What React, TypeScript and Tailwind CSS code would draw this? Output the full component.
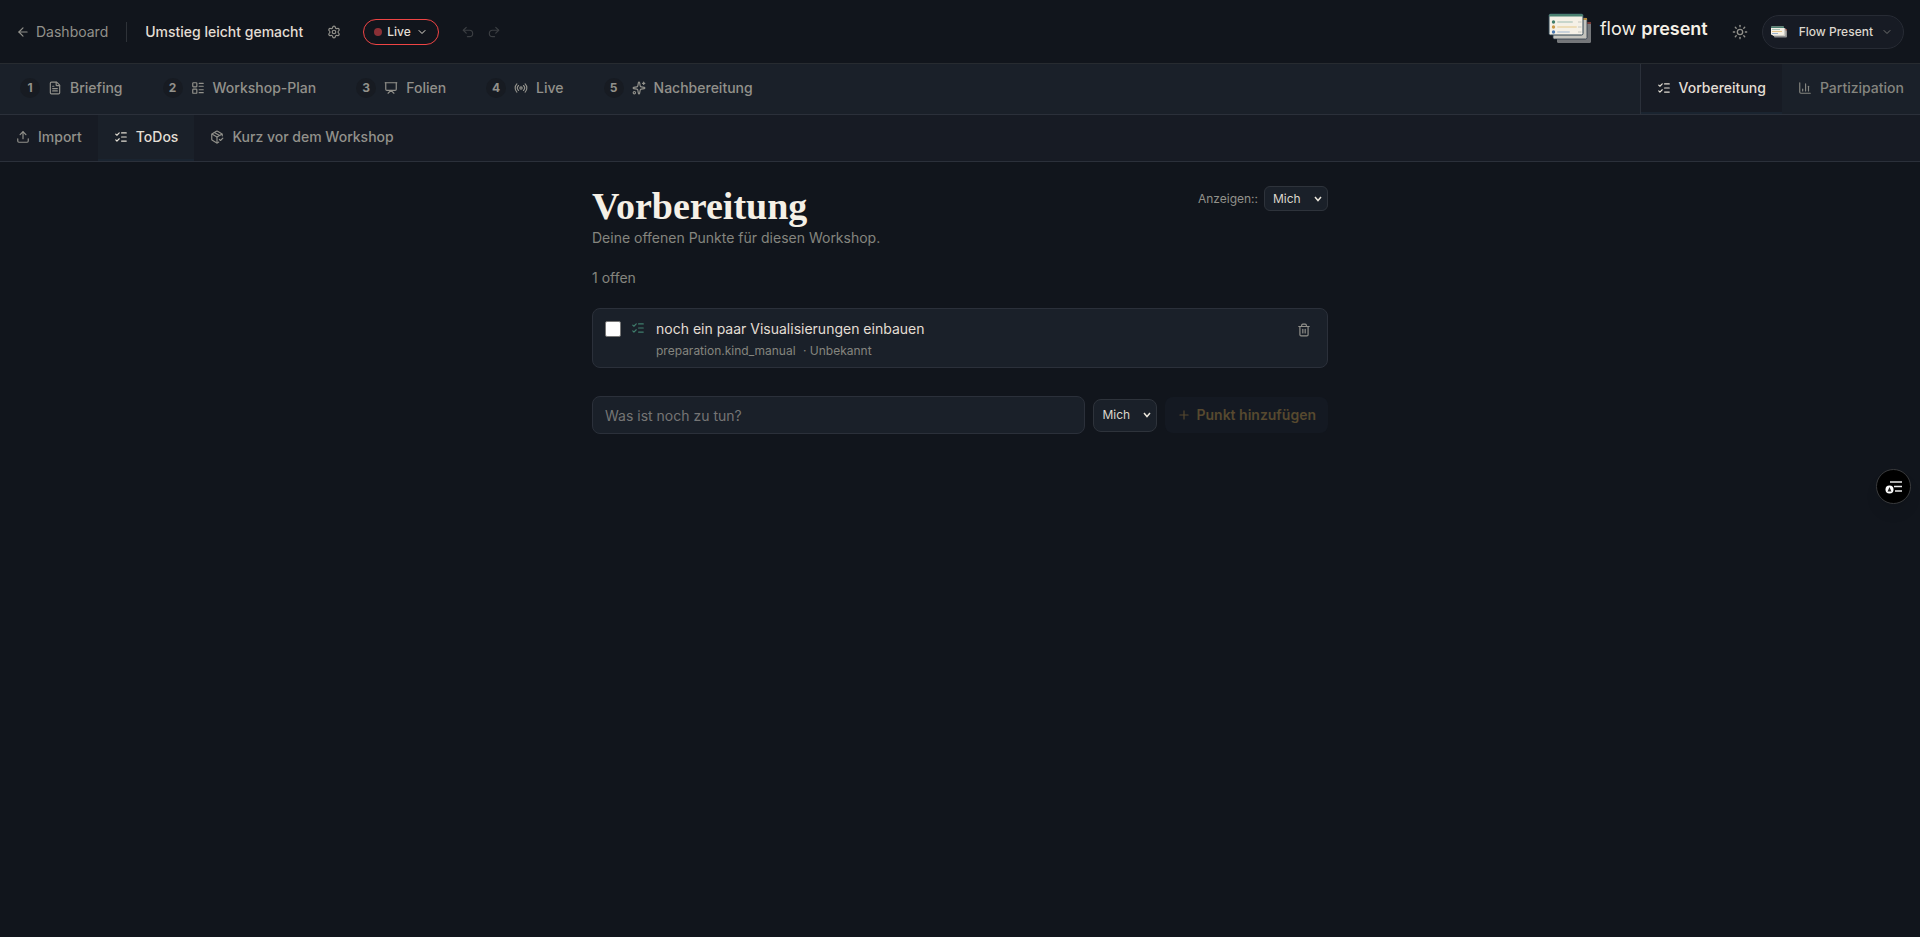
import {
    ArrowLeft,
    ChartColumn,
    ChevronDown,
    FileText,
    LayoutList,
    ListChecks,
    PackageCheck,
    Plus,
    Presentation,
    Radio,
    Redo2,
    Settings,
    Sparkles,
    Sun,
    Trash2,
    Undo2,
    Upload,
} from "lucide-react";

const steps = [
    { label: "Briefing", icon: FileText },
    { label: "Workshop-Plan", icon: LayoutList },
    { label: "Folien", icon: Presentation },
    { label: "Live", icon: Radio },
    { label: "Nachbereitung", icon: Sparkles },
];

const areas = [
    { label: "Vorbereitung", icon: ListChecks, active: true },
    { label: "Partizipation", icon: ChartColumn, active: false },
];

const subTabs = [
    { label: "Import", icon: Upload, active: false },
    { label: "ToDos", icon: ListChecks, active: true },
    { label: "Kurz vor dem Workshop", icon: PackageCheck, active: false },
];

const Logo = ({ className }: { className: string }) => (
    <svg viewBox="0 0 44 32" className={className} aria-hidden="true">
        <rect x="9" y="9" width="34" height="21" rx="1.5" fill="#75777a" />
        <rect x="39" y="9" width="4" height="2" fill="#7a3a35" />
        <rect x="5" y="5" width="34" height="21" rx="1.5" fill="#c4c3bd" stroke="#2c3947" strokeWidth="0.8" />
        <rect x="35" y="5" width="4" height="2" fill="#b58a3e" />
        <rect x="1" y="1" width="34" height="21" rx="1.5" fill="#f5f0e6" stroke="#2c4250" strokeWidth="1" />
        <path d="M1 2.500Q1 1 2.500 1H33.500Q35 1 35 2.500V3.500H1Z" fill="#4a8070" />
        <circle cx="5.500" cy="9" r="1.700" fill="#3f7d6c" />
        <circle cx="5.500" cy="14" r="1.700" fill="#c99a4a" />
        <circle cx="5.500" cy="19" r="1.700" fill="#4a78b0" />
        <rect x="9" y="8" width="16" height="2" rx="1" fill="#c8d5cb" />
        <rect x="9" y="13" width="20" height="2" rx="1" fill="#eddcb8" />
        <rect x="9" y="18" width="13" height="2" rx="1" fill="#c9d2da" />
        <path d="M30 9h3.500M30 14h3.500M30 19h3.500" stroke="#d5d3cc" strokeWidth="1.500" />
    </svg>
);

// Simplified mark that stays readable at avatar size
const LogoSmall = ({ className }: { className: string }) => (
    <svg viewBox="0 0 16 12" className={className} aria-hidden="true">
        <rect x="3" y="3" width="13" height="8.500" rx="1" fill="#8d8e8f" />
        <rect x="14" y="3" width="2" height="1.500" fill="#8a4a42" />
        <rect x="1.500" y="2" width="13" height="8" rx="1" fill="#cfcdc6" />
        <rect x="0" y="0.500" width="13" height="8.500" rx="1" fill="#f5f0e6" />
        <rect x="0" y="0.500" width="13" height="1.500" fill="#4a8070" />
        <rect x="1" y="3" width="8" height="1" fill="#a9c2b8" />
        <rect x="1" y="5" width="10" height="1" fill="#e3c48a" />
        <rect x="1" y="7" width="6" height="1" fill="#9db3cc" />
    </svg>
);

const TopBar = () => (
    <header className="flex h-16 items-center justify-between border-b border-[#272b30] px-4">
        <div className="flex items-center">
            <a href="#dashboard" className="flex items-center gap-1.5 text-[#92918b]">
                <ArrowLeft size={14} />
                Dashboard
            </a>
            <div className="mx-[18px] h-5 w-px bg-[#2e3238]" />
            <h2 className="font-medium text-[#e3ded4]">Umstieg leicht gemacht</h2>
            <button aria-label="Einstellungen" className="ml-4 p-2 text-[#92918b]">
                <Settings size={14} />
            </button>
            <button className="ml-3.5 flex h-[26px] items-center gap-[5px] rounded-full border border-[#ef4444] px-2.5 text-xs font-medium text-[#e3ded4]">
                <span className="size-2 rounded-full bg-[#8b3036]" />
                Live
                <ChevronDown size={12} />
            </button>
            <button aria-label="Rückgängig" disabled className="ml-4 p-1.5 text-[#3b3e42]">
                <Undo2 size={14} />
            </button>
            <button aria-label="Wiederholen" disabled className="p-1.5 text-[#3b3e42]">
                <Redo2 size={14} />
            </button>
        </div>

        <div className="flex items-center">
            <a href="#home" className="flex items-center gap-2 pb-1.5 text-lg text-[#f5f0e6]">
                <Logo className="h-8 w-11" />
                <span>
                    flow <strong className="font-semibold">present</strong>
                </span>
            </a>
            <button aria-label="Helles Design" className="ml-4 p-2 text-[#92918b]">
                <Sun size={16} />
            </button>
            <button className="ml-1.5 flex h-[34px] items-center rounded-full border border-[#272b34] bg-[#171b24] pr-2.5 pl-2 text-xs font-medium text-[#dcd7cd]">
                <LogoSmall className="h-3 w-4" />
                <span className="mr-2 ml-3">Flow Present</span>
                <ChevronDown size={12} className="text-[#6f706e]" />
            </button>
        </div>
    </header>
);

const StepBar = () => (
    <nav aria-label="Phasen" className="flex justify-between border-b border-[#2b303a] bg-[#1a2029] font-medium">
        <div className="flex">
            {steps.map(({ label, icon: Icon }, index) => (
                <button key={label} className="flex items-center gap-2 border-b-2 border-transparent px-5 text-[#92918b]">
                    <span className="flex size-5 items-center justify-center rounded-full bg-[#171b22] text-xs font-bold">
                        {index + 1}
                    </span>
                    <Icon size={14} />
                    {label}
                </button>
            ))}
        </div>
        <div className="flex border-l border-[#2b303a]">
            {areas.map(({ label, icon: Icon, active }) => (
                <button
                    key={label}
                    className={`flex h-[50px] items-center gap-2 border-b-2 px-4 ${
                        active ? "border-[#1a2430] bg-[#171b24] text-[#e3ded4]" : "border-transparent text-[#85857f]"
                    }`}
                >
                    <Icon size={14} />
                    {label}
                </button>
            ))}
        </div>
    </nav>
);

const SubBar = () => (
    <nav aria-label="Vorbereitung" className="flex border-b border-[#2b303a] bg-[#171b24] font-medium">
        {subTabs.map(({ label, icon: Icon, active }) => (
            <button
                key={label}
                className={`flex h-[46px] items-center gap-2 border-b-2 px-4 ${
                    active ? "border-[#1a2430] bg-[#1a2029] text-[#e3ded4]" : "border-transparent text-[#92918b]"
                }`}
            >
                <Icon size={14} />
                {label}
            </button>
        ))}
    </nav>
);

const PersonSelect = ({ id, label, className }: { id: string; label?: string; className: string }) => (
    <div className="relative">
        <select
            id={id}
            aria-label={label}
            className={`w-16 appearance-none border border-[#2e333b] bg-[#1a2029] pl-2 text-xs text-[#dcd7cd] ${className}`}
        >
            <option>Mich</option>
            <option>Alle</option>
        </select>
        <svg viewBox="0 0 8 6" className="pointer-events-none absolute inset-y-0 right-1.5 my-auto h-1.5 w-2" aria-hidden="true">
            <path d="M1 1l3 3.500L7 1" fill="none" stroke="#ebe6dc" strokeWidth="1.500" />
        </svg>
    </div>
);

export default function App() {
    return (
        <div className="min-h-screen bg-[#11151c] font-['Inter',sans-serif] text-sm text-[#e3ded4]">
            <TopBar />
            <StepBar />
            <SubBar />

            <main className="mx-auto flex max-w-3xl flex-col gap-5 px-4 py-6">
                <div className="flex items-start justify-between">
                    <div>
                        <h1 className="font-['Liberation_Serif',serif] text-[38px] leading-10 font-bold text-[#f5f0e6]">
                            Vorbereitung
                        </h1>
                        <p className="mt-0.5 text-[#85857f]">Deine offenen Punkte für diesen Workshop.</p>
                    </div>
                    <div className="flex items-center gap-1.5 text-xs">
                        <label htmlFor="filter" className="text-[#92918b]">Anzeigen::</label>
                        <PersonSelect id="filter" className="h-[25px] rounded-md" />
                    </div>
                </div>

                <p className="text-[#85857f]">1 offen</p>

                <ul>
                    <li className="flex items-start rounded-lg border border-[#2b303a] bg-[#1a2029] px-3 pt-2.5 pb-2">
                        <input
                            id="todo"
                            type="checkbox"
                            className="mt-0.5 size-4 appearance-none rounded-xs border border-[#767676] bg-white"
                        />
                        <ListChecks size={14} className="mt-0.5 mr-[11px] ml-2.5 text-[#3f7d6c]" />
                        <div className="flex-1">
                            <label htmlFor="todo">noch ein paar Visualisierungen einbauen</label>
                            <p className="mt-1 text-xs text-[#85857f]">
                                preparation.kind_manual <span className="ml-1">· Unbekannt</span>
                            </p>
                        </div>
                        <button aria-label="Löschen" className="p-1 text-[#92918b]">
                            <Trash2 size={14} />
                        </button>
                    </li>
                </ul>

                <form className="mt-2 flex items-center gap-2">
                    <input
                        type="text"
                        aria-label="Neuer Punkt"
                        placeholder="Was ist noch zu tun?"
                        className="h-[38px] min-w-0 flex-1 rounded-lg border border-[#2b303a] bg-[#1a2029] px-3 placeholder:text-[#757575]"
                    />
                    <PersonSelect id="assignee" label="Zuständig" className="h-[33px] rounded-lg" />
                    <button
                        type="button"
                        disabled
                        className="flex h-9 items-center gap-[5px] rounded-lg bg-[#141922] px-3 font-semibold text-[#57492f]"
                    >
                        <Plus size={14} />
                        Punkt hinzufügen
                    </button>
                </form>
            </main>

            <button
                aria-label="Notizen"
                className="fixed top-[469px] right-[9px] flex size-[35px] items-center justify-center rounded-full border border-[#3a3b3d] bg-black shadow-lg"
            >
                <svg viewBox="0 0 18 14" className="h-3.5 w-[18px]" aria-hidden="true">
                    <path d="M5 2h12M9 6.500h8M10 11h7" stroke="#e8e8e8" strokeWidth="1.500" />
                    <circle cx="4.500" cy="9.500" r="4" fill="#fff" />
                    <path d="M4.500 7L6.500 11.500H2.500Z" fill="#222" />
                </svg>
            </button>
        </div>
    );
}
